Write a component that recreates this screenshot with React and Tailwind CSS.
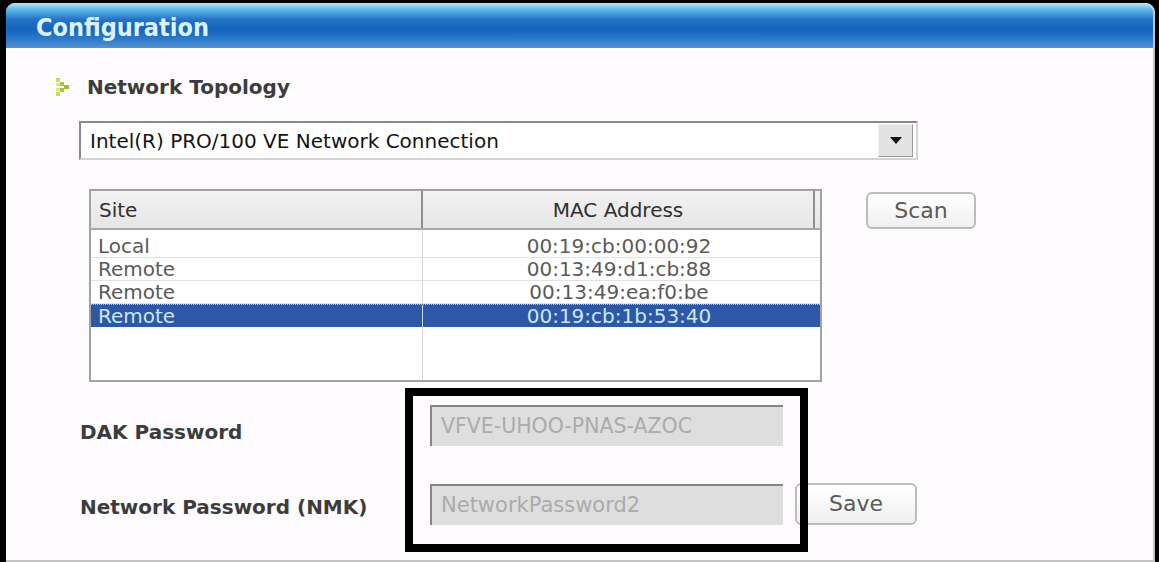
import React from 'react';

const rows = [
  { site: 'Local', mac: '00:19:cb:00:00:92' },
  { site: 'Remote', mac: '00:13:49:d1:cb:88' },
  { site: 'Remote', mac: '00:13:49:ea:f0:be' },
  { site: 'Remote', mac: '00:19:cb:1b:53:40', selected: true },
];

// little dotted green chevron used before section titles
const Bullet = () => (
  <svg width="14" height="18" viewBox="0 0 14 18">
    <rect x="0" y="0" width="4" height="4" fill="#c9dc5a" />
    <rect x="4" y="4" width="4" height="4" fill="#a9c53a" />
    <rect x="0" y="5" width="4" height="3" fill="#dbe88a" />
    <rect x="8" y="7" width="5" height="4" fill="#9dbd2e" />
    <rect x="4" y="10" width="4" height="4" fill="#a9c53a" />
    <rect x="0" y="10" width="4" height="3" fill="#dbe88a" />
    <rect x="0" y="14" width="4" height="4" fill="#c9dc5a" />
  </svg>
);

const App = () => {
  return (
    <div className="w-[1159px] h-[562px] bg-black pl-[6px] pt-[3px] pr-[4px] font-['DejaVu_Sans',sans-serif]">
      <div className="relative h-full bg-[#fdfbfd] rounded-t-[9px] border-r-2 border-b-2 border-[#c4c4c4] flex flex-col">
        {/* Title bar */}
        <div className="h-[45px] rounded-t-[9px] bg-[linear-gradient(to_bottom,#b0e8fa_0%,#62baea_14%,#2474c8_36%,#1463bd_58%,#2c7acb_80%,#5592d2_100%)] flex items-center pl-[30px] pt-[4px]">
          <span className="font-['DejaVu_Sans_Condensed','DejaVu_Sans',sans-serif] text-[25px] font-bold text-[#dcf1fb] leading-none">Configuration</span>
        </div>
        <div className="h-[2px] bg-white" />

        {/* Section heading */}
        <div className="mt-[25px] ml-[50px] h-[24px] flex items-center gap-[17px]">
          <Bullet />
          <span className="text-[20px] font-bold text-[#3c3c3c] leading-none">Network Topology</span>
        </div>

        {/* Adapter select */}
        <div className="mt-[22px] ml-[73px] w-[839px] h-[39px] flex items-center bg-white border-2 border-t-[#8a8a8a] border-l-[#8a8a8a] border-r-[#d4d4d4] border-b-[#d4d4d4]">
          <span className="flex-1 pl-[9px] text-[20px] text-[#141414] leading-none">Intel(R) PRO/100 VE Network Connection</span>
          <div className="w-[35px] h-[33px] mr-[3px] bg-[#e2e2e2] border border-t-[#f4f4f4] border-l-[#f4f4f4] border-r-[#9a9a9a] border-b-[#9a9a9a] flex items-center justify-center">
            <svg width="12" height="7" viewBox="0 0 12 7">
              <path d="M0 0 H12 L6 7 Z" fill="#111" />
            </svg>
          </div>
        </div>

        {/* Site table + scan */}
        <div className="mt-[29px] ml-[83px] flex items-start gap-[44px]">
          <div className="w-[733px] h-[193px] border-2 border-[#a2a2a2] bg-white flex flex-col text-[20px] leading-none">
            <div className="h-[39px] flex bg-[linear-gradient(to_bottom,#f2f2f2,#e6e6e6)] border-b-2 border-[#a8a8a8] text-[#303030]">
              <div className="w-[332px] pl-[8px] flex items-center border-r-2 border-[#8e8e8e]">Site</div>
              <div className="w-[392px] flex items-center justify-center border-r-2 border-[#8e8e8e]">MAC Address</div>
              <div className="flex-1" />
            </div>
            <div className="h-[5px] flex">
              <div className="w-[332px] border-r border-[#d6d6d6]" />
            </div>
            {rows.map((r, i) => (
              <div
                key={i}
                className={
                  r.selected
                    ? 'h-[23px] flex bg-[#2c58a7] text-[#cfe4f8] border-t border-dotted border-[#e0c060]'
                    : 'h-[23px] flex text-[#5a5a5a] border-b border-[#e2e2e2]'
                }
              >
                <div className={r.selected ? 'w-[332px] pl-[7px] flex items-center border-r border-[#c8dcf4]' : 'w-[332px] pl-[7px] flex items-center border-r border-[#d6d6d6]'}>
                  {r.site}
                </div>
                <div className="w-[392px] flex items-center justify-center">{r.mac}</div>
              </div>
            ))}
            <div className="flex-1 flex">
              <div className="w-[332px] border-r border-[#d6d6d6]" />
            </div>
          </div>
          <button className="w-[110px] h-[37px] mt-[3px] rounded-[6px] border-2 border-[#bcbcbc] bg-[linear-gradient(to_bottom,#ffffff,#f0f0f0)] text-[22px] text-[#5a5a5a] leading-none">
            Scan
          </button>
        </div>

        {/* Passwords */}
        <div className="mt-[23px] ml-[74px] flex items-center">
          <span className="w-[350px] pt-[12px] text-[20px] font-bold text-[#3c3c3c] leading-none">DAK Password</span>
          <div className="w-[353px] h-[41px] bg-[#dedede] border-t-2 border-l-2 border-[#858585] flex items-center pl-[9px] text-[20.5px] text-[#ababab] leading-none">
            VFVE-UHOO-PNAS-AZOC
          </div>
        </div>
        <div className="mt-[37px] ml-[74px] flex items-center">
          <span className="w-[350px] pt-[6px] text-[20px] font-bold text-[#3c3c3c] leading-none">Network Password (NMK)</span>
          <div className="w-[353px] h-[41px] bg-[#dedede] border-t-2 border-l-2 border-[#858585] flex items-center pl-[9px] text-[21px] text-[#ababab] leading-none">
            NetworkPassword2
          </div>
          <button className="ml-[12px] w-[122px] h-[42px] rounded-[6px] border-2 border-[#bcbcbc] bg-[linear-gradient(to_bottom,#ffffff,#f0f0f0)] text-[22px] text-[#5a5a5a] leading-none">
            Save
          </button>
        </div>

        {/* annotation frame drawn over the screenshot */}
        <div className="absolute left-[399px] top-[385px] w-[403px] h-[164px] border-8 border-black pointer-events-none" />
      </div>
    </div>
  );
};

export default App;
